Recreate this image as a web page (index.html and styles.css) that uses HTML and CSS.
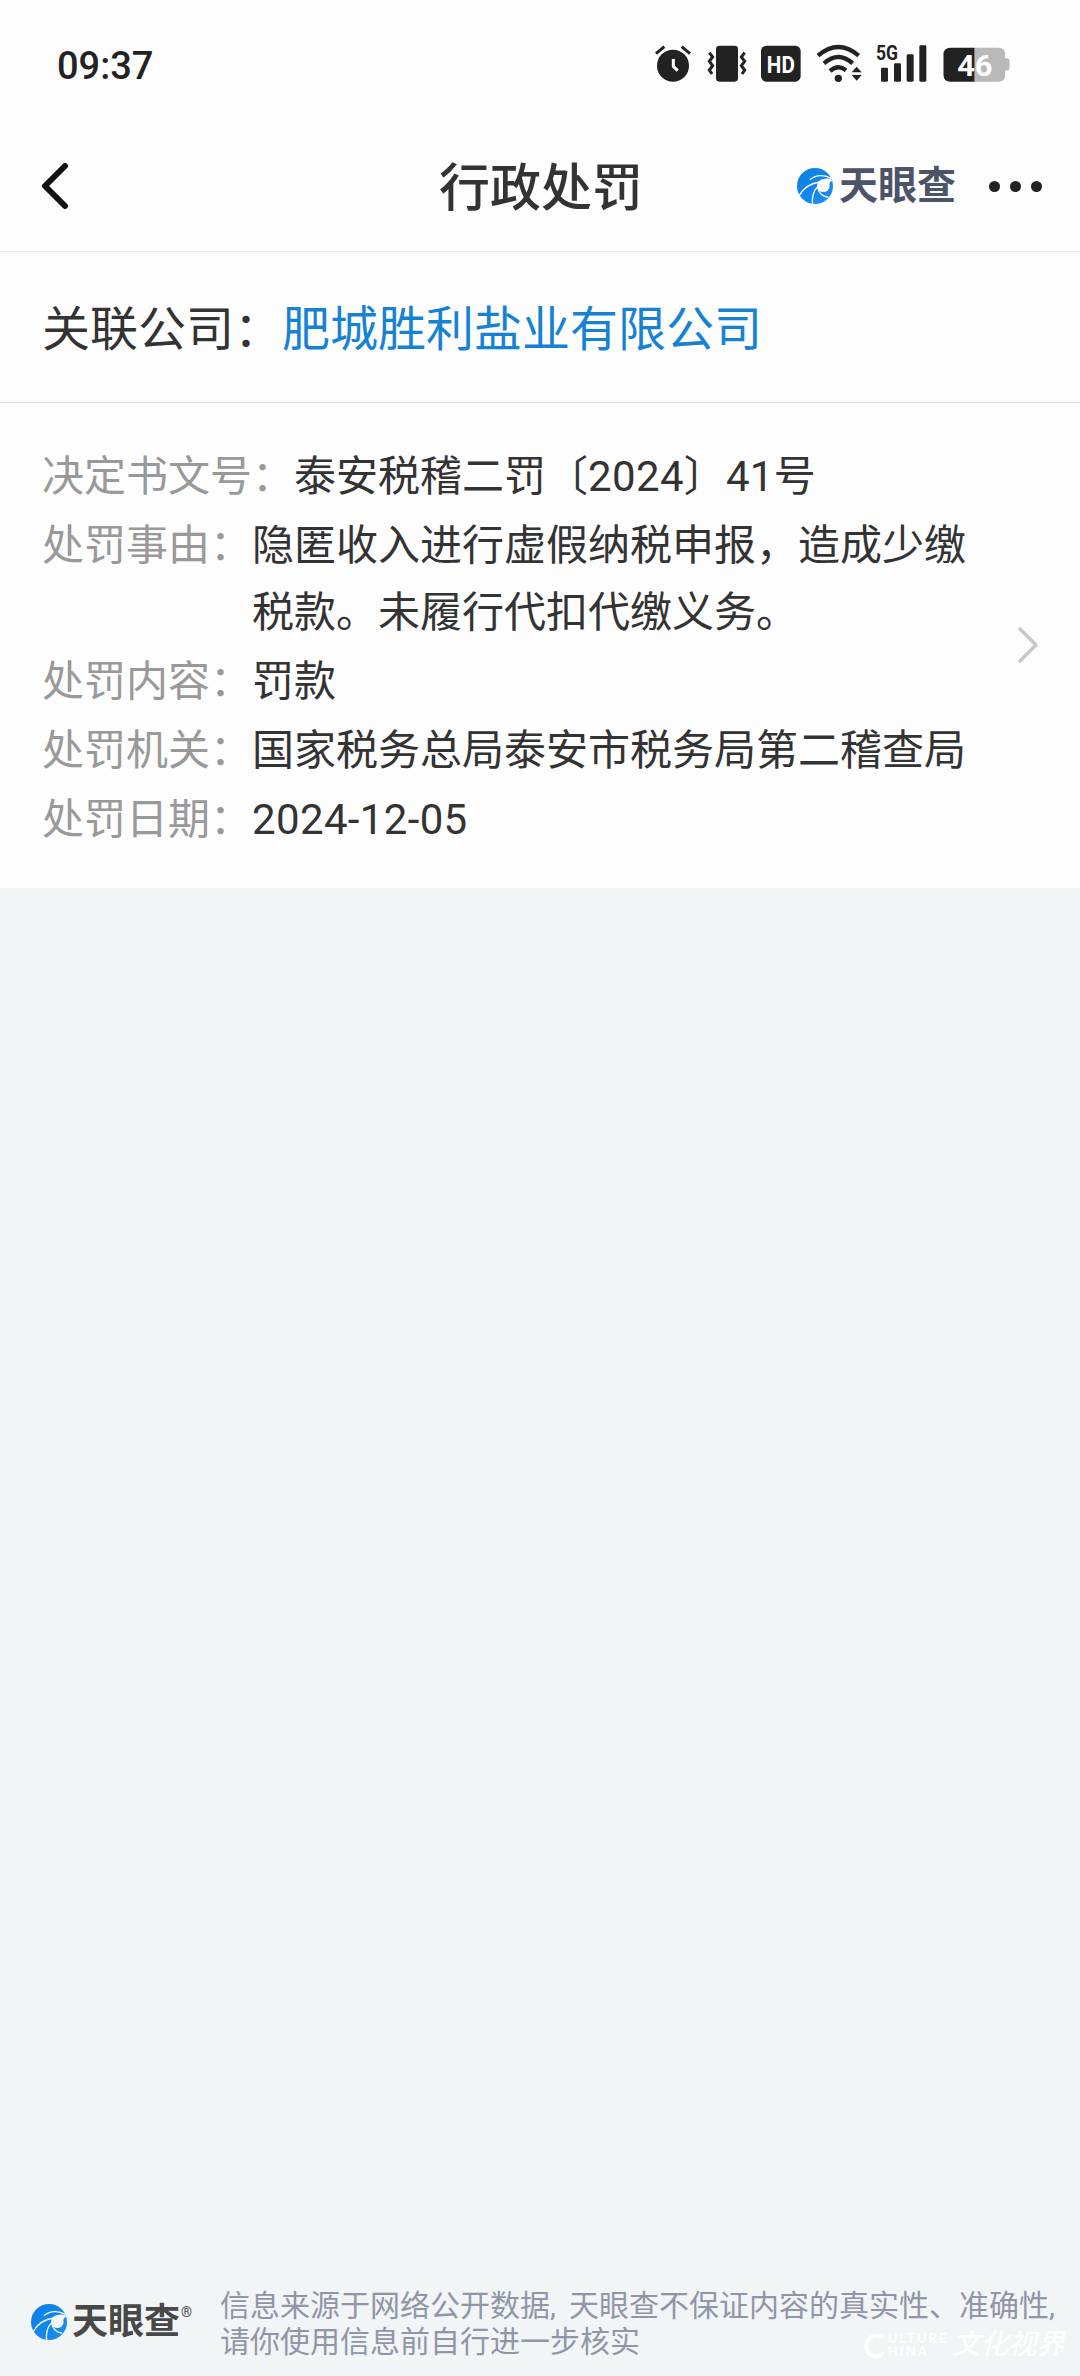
FILE: index.html
```html
<!DOCTYPE html>
<html lang="zh-CN">
<head>
<meta charset="utf-8">
<title>行政处罚</title>
<link rel="stylesheet" href="styles.css">
</head>
<body>
<svg width="0" height="0" class="defs" aria-hidden="true">
  <defs>
    <linearGradient id="blue" x1="0" y1="0" x2="1" y2="1">
      <stop offset="0" stop-color="#0a7fe6"/><stop offset="1" stop-color="#1c8cf0"/>
    </linearGradient>
    <symbol id="swirl" viewBox="0 0 108 108">
      <circle cx="54" cy="54" r="54" fill="url(#blue)"/>
      <circle class="cut" cx="79" cy="53" r="19"/>
      <path class="cut" d="M72 36C84 30 96 30 103 34L107 42C104 38 99 38 97 48Z"/>
      <path class="stroke" d="M102 31C84 19 58 20 40 34"/>
      <path class="stroke" d="M68 42C42 46 18 60 6 84"/>
      <path class="stroke" d="M64 54C50 68 44 88 47 108"/>
      <path class="stroke" d="M63 60C64 74 76 85 92 87"/>
    </symbol>
  </defs>
</svg>

<div class="screen">
  <header class="top">
    <div class="status">
      <span class="time">09:37</span>
      <div class="status-icons">
        <svg class="alarm" viewBox="42 40 108 120"><circle cx="96" cy="108" r="48"/><path class="line" d="M45 72L70 51M147 72L122 51"/><path class="hand" d="M97 88V110L110 123"/></svg>
        <svg class="vibrate" viewBox="198 40 120 120"><rect x="225" y="48" width="66" height="108" rx="10"/><path class="zig" d="M205 69L215 82L205 95L215 108L205 121L213 133M311 69L301 82L311 95L301 108L311 121L303 133"/></svg>
        <svg class="hd" viewBox="360 40 120 120"><rect x="360" y="48" width="119" height="108" rx="16"/><text x="419.500" y="129" textLength="84" lengthAdjust="spacingAndGlyphs">HD</text></svg>
        <svg class="wifi" viewBox="524 40 138 120"><path class="arc" d="M530 78Q591 26 652 78M548 101Q591 63 634 101M566 124Q591 103 614 122"/><circle cx="591" cy="146" r="11"/><path class="halo" d="M646 106L666 131L646 157L625 131Z"/><path d="M646 111L661 128H631ZM646 153L661 136H631Z"/></svg>
        <svg class="signal" viewBox="702 40 156 120"><rect x="720" y="114" width="21" height="42" rx="4"/><rect x="759" y="101" width="21" height="55" rx="4"/><rect x="797" y="74" width="21" height="82" rx="4"/><rect x="835" y="47" width="21" height="109" rx="4"/><text x="738" y="91" textLength="66" lengthAdjust="spacingAndGlyphs">5G</text></svg>
        <svg class="battery" viewBox="905 40 200 120"><path class="rest" d="M999 54H1071Q1091 54 1091 74V86H1098Q1104 86 1104 94V114Q1104 122 1098 122H1091V136Q1091 156 1071 156H999Z"/><path d="M999 54H927Q906 54 906 74V136Q906 156 927 156H999Z"/><text x="1000" y="138" textLength="106" lengthAdjust="spacingAndGlyphs">46</text></svg>
      </div>
    </div>
    <nav class="bar">
      <svg class="back" viewBox="0 0 30 48"><path d="M25 4L5 24L25 44"/></svg>
      <h1 class="title">行政处罚</h1>
      <div class="brand">
        <svg class="mark"><use href="#swirl"/></svg>
        <span class="name">天眼查</span>
      </div>
      <div class="more"><i></i><i></i><i></i></div>
    </nav>
  </header>

  <section class="company"><span>关联公司：</span><a class="link">肥城胜利盐业有限公司</a></section>

  <section class="record">
    <dl class="fields">
      <div class="field"><dt>决定书文号：</dt><dd>泰安税稽二罚〔<span class="num">2024</span>〕<span class="num">41</span>号</dd></div>
      <div class="field"><dt>处罚事由：</dt><dd>隐匿收入进行虚假纳税申报，造成少缴税款。未履行代扣代缴义务。</dd></div>
      <div class="field"><dt>处罚内容：</dt><dd>罚款</dd></div>
      <div class="field"><dt>处罚机关：</dt><dd>国家税务总局泰安市税务局第二稽查局</dd></div>
      <div class="field"><dt>处罚日期：</dt><dd><span class="num">2024-12-05</span></dd></div>
    </dl>
    <svg class="chevron" viewBox="0 0 22 40"><path d="M3 3L19 19L3 35"/></svg>
  </section>

  <footer class="foot">
    <div class="foot-brand">
      <svg class="mark on-gray"><use href="#swirl"/></svg>
      <span class="name">天眼查</span><span class="reg">®</span>
    </div>
    <p class="notice">信息来源于网络公开数据<span class="comma">,</span>天眼查不保证内容的真实性、准确性,<br>请你使用信息前自行进一步核实</p>
  </footer>

  <div class="watermark">
    <span class="wm-c">C</span>
    <span class="wm-en"><span class="wm-a">ULTURE</span><span class="wm-b">HINA</span></span>
    <span class="wm-cn">文化视界</span>
  </div>
</div>
</body>
</html>
```
FILE: styles.css
```css
* { box-sizing: border-box; }
body {
  margin: 0;
  background: #f1f5f6;
  font-family: Roboto, "Noto Sans CJK SC", sans-serif;
  color: #333;
}
h1, dl, dd, p { margin: 0; }
svg { display: block; }
.defs { position: absolute; }
.screen {
  position: relative;
  display: flex;
  flex-direction: column;
  width: 1080px;
  height: 2376px;
  overflow: hidden;
}

/* Status bar and title bar */
.top { height: 252px; background: #fdfdfd; border-bottom: 1px solid #ececec; }
.status {
  display: flex;
  justify-content: space-between;
  height: 120px;
  padding: 43px 70px 0 57px;
}
.time { font-size: 38px; font-weight: 500; line-height: 46px; color: #222; }
.status-icons { display: flex; fill: #222; }
.status-icons svg { height: 40px; margin-left: 16px; overflow: visible; }
.status-icons .alarm { width: 36px; }
.status-icons .vibrate { width: 40px; }
.status-icons .hd { width: 40px; margin-left: 14px; }
.status-icons .wifi { width: 46px; margin-left: 15px; }
.status-icons .signal { width: 52px; margin-left: 13px; }
.status-icons .battery { width: 67px; }
.alarm .line, .vibrate .zig { fill: none; stroke: #222; stroke-width: 9; }
.alarm .hand { fill: none; stroke: #fff; stroke-width: 9; }
.hd text { fill: #fff; font-size: 73px; font-weight: 700; text-anchor: middle; }
.wifi .arc { fill: none; stroke: #222; stroke-width: 13; }
.wifi .halo { fill: #fdfdfd; }
.signal text { font-size: 62px; font-weight: 700; text-anchor: middle; }
.battery .rest { fill: #b9b9b9; }
.battery text { fill: #fff; font-size: 88px; font-weight: 700; text-anchor: middle; }

.bar { display: flex; align-items: center; height: 132px; padding: 0 38px 0 40px; }
.back { width: 30px; height: 48px; }
.back path { fill: none; stroke: #111; stroke-width: 6; stroke-linecap: round; stroke-linejoin: round; }
.title { margin-left: 369px; padding-top: 5px; font-size: 51px; font-weight: 500; line-height: 76px; }
.brand { display: flex; align-items: center; margin-left: auto; }
.mark { width: 36px; height: 36px; --gap: #fdfdfd; }
.mark.on-gray { --gap: #f1f5f6; }
.cut { fill: var(--gap); }
.stroke { fill: none; stroke: var(--gap); stroke-width: 4; stroke-linecap: round; }
.brand .name { margin-left: 6px; font-size: 39px; font-weight: 700; line-height: 40px; color: #4d5368; }
.more { display: flex; gap: 10px; margin-left: 33px; }
.more i { width: 11px; height: 11px; border-radius: 50%; background: #222; }

/* Related company */
.company {
  height: 151px;
  padding: 42px 42px 0;
  background: #fdfdfd;
  border-bottom: 1px solid #dcdcdc;
  font-size: 48px;
  line-height: 72px;
}
.link { color: #1682d4; }

/* Penalty record */
.record {
  display: flex;
  align-items: center;
  justify-content: space-between;
  height: 485px;
  padding: 0 41px 0 42px;
  background: #fdfdfd;
}
.fields { display: flex; flex-direction: column; gap: 2px; width: 928px; padding-top: 4px; font-size: 42px; line-height: 67px; }
.field { display: flex; }
.field dt { flex: none; color: #999; }
.num { letter-spacing: 0.35px; }
.chevron { width: 22px; height: 40px; }
.chevron path { fill: none; stroke: #c8c8c8; stroke-width: 3.5; stroke-linecap: round; stroke-linejoin: round; }

/* Source notice */
.foot { display: flex; align-items: flex-start; margin-top: auto; height: 88px; padding-left: 31px; }
.foot-brand { display: flex; align-items: center; height: 40px; margin-top: 14px; width: 189px; }
.foot-brand .name { margin-left: 5px; font-size: 36px; font-weight: 700; line-height: 40px; color: #484848; }
.reg { align-self: flex-start; margin: 2px 0 0 1px; font-size: 14px; line-height: 16px; color: #484848; }
.notice { font-size: 30px; line-height: 36px; color: #9096a8; white-space: nowrap; }
.comma { display: inline-block; width: 19px; }

.watermark {
  position: absolute;
  left: 863px;
  top: 2326px;
  display: flex;
  align-items: center;
  height: 38px;
  color: #fff;
}
.wm-c { font: 700 33px/36px Lato, sans-serif; }
.wm-en { display: flex; flex-direction: column; margin-left: 3px; font: 700 13px/13px Lato, sans-serif; letter-spacing: 2px; }
.wm-cn { margin-left: 4px; font-size: 28px; font-weight: 500; font-style: italic; line-height: 36px; }
```
